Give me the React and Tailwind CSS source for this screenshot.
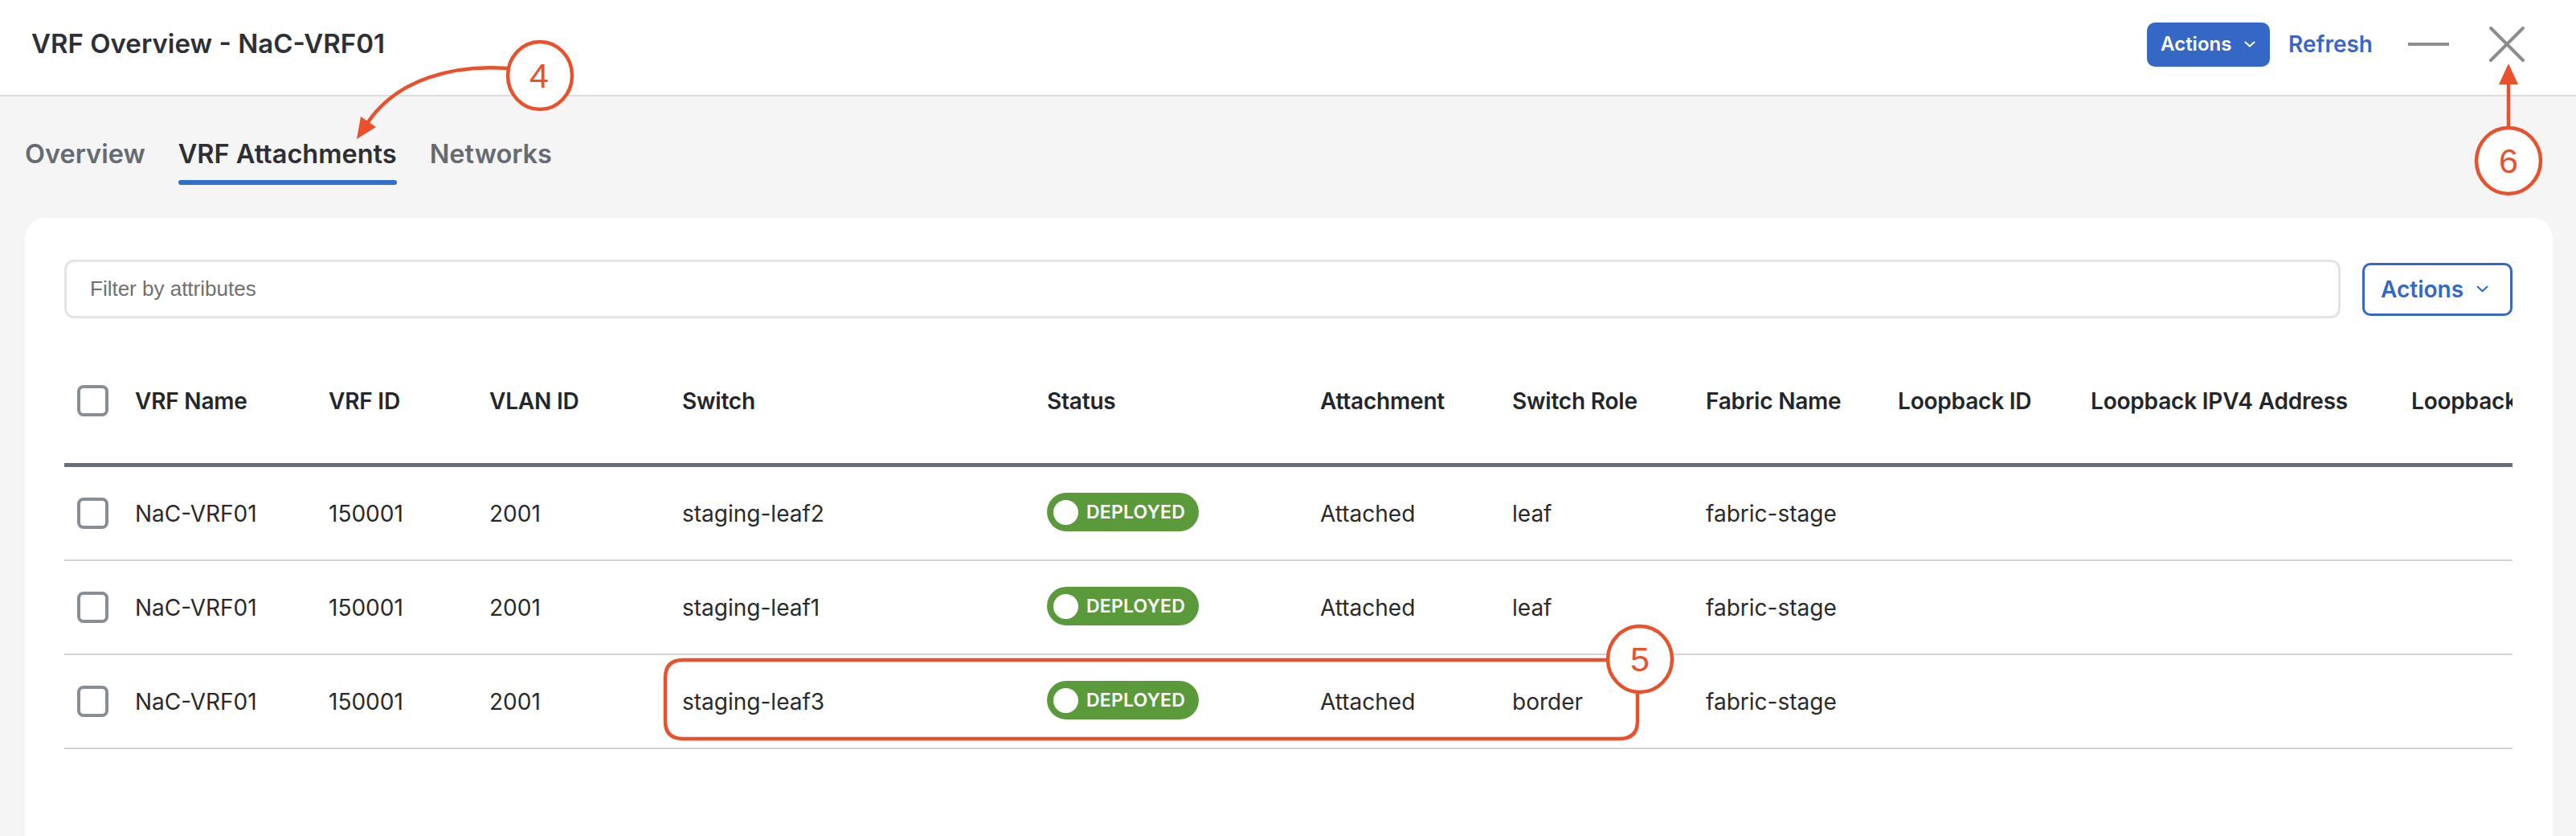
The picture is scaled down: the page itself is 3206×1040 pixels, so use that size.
import React from "react";

const COLS = "grid-cols-[72px_241px_200px_240px_454px_340px_239px_241px_239px_240px_399px_300px]";

function Checkbox() {
  return <div className="w-[39px] h-[39px] box-border border-[4px] border-[#888e96] rounded-[8px] bg-white" />;
}

function Chevron({ className }) {
  return (
    <svg className={className} viewBox="0 0 14 8" fill="none">
      <path d="M1.5 1.5 L7 6.5 L12.5 1.5" stroke="currentColor" strokeWidth="2" strokeLinecap="round" strokeLinejoin="round" />
    </svg>
  );
}

function Badge() {
  return (
    <div className="inline-flex items-center h-[48px] w-[189px] rounded-full bg-[#5b9a3b] pl-[8px]">
      <div className="w-[31px] h-[31px] rounded-full bg-white" />
      <span className="ml-[10px] text-[23px] font-semibold text-white tracking-[0.2px] leading-none">DEPLOYED</span>
    </div>
  );
}

const headers = [
  "VRF Name",
  "VRF ID",
  "VLAN ID",
  "Switch",
  "Status",
  "Attachment",
  "Switch Role",
  "Fabric Name",
  "Loopback ID",
  "Loopback IPV4 Address",
  "Loopback IPV6 Address",
];

const rows = [
  { sw: "staging-leaf2", role: "leaf" },
  { sw: "staging-leaf1", role: "leaf" },
  { sw: "staging-leaf3", role: "border" },
];

export default function App() {
  return (
    <div className="relative w-[3206px] h-[1040px] overflow-hidden bg-[#f5f5f5] font-['Inter',sans-serif]">
      {/* Header */}
      <header className="h-[120px] box-border bg-white border-b-2 border-[#dddddd] flex items-center pb-[8px] pl-[39px] pr-[63px]">
        <h1 className="text-[33px] font-semibold text-[#2d3036]">VRF Overview - NaC-VRF01</h1>
        <div className="ml-auto flex items-center">
          <button className="flex items-center h-[55px] w-[153px] rounded-[10px] bg-[#3567c6] text-white pl-[17px]">
            <span className="text-[24px] font-semibold">Actions</span>
            <Chevron className="ml-[16px] w-[14px] h-[8px] text-white" />
          </button>
          <span className="ml-[23px] text-[28px] font-semibold text-[#3a66c9]">Refresh</span>
          <div className="ml-[44px] w-[51px] h-[4px] bg-[#8e8e8e]" />
          <svg className="ml-[49px] w-[46px] h-[46px]" viewBox="0 0 46 46">
            <path d="M3 3 L43 43 M43 3 L3 43" stroke="#8c8c8c" strokeWidth="4" strokeLinecap="round" />
          </svg>
        </div>
      </header>

      {/* Tabs */}
      <nav className="mt-[52px] pl-[31px] flex gap-[41px]">
        <div className="flex flex-col">
          <span className="leading-[40px] text-[32.5px] font-semibold text-[#656b73]">Overview</span>
          <div className="mt-[12px] h-[6px]" />
        </div>
        <div className="flex flex-col">
          <span className="leading-[40px] text-[32.5px] font-semibold text-[#2c2f34]">VRF Attachments</span>
          <div className="mt-[12px] h-[6px] rounded-full bg-[#2f6fd0]" />
        </div>
        <div className="flex flex-col">
          <span className="leading-[40px] text-[32.5px] font-semibold text-[#656b73]">Networks</span>
          <div className="mt-[12px] h-[6px]" />
        </div>
      </nav>

      {/* Card */}
      <section className="mt-[41px] ml-[31px] mr-[29px] h-[800px] rounded-t-[26px] bg-white pt-[52px] pl-[49px] pr-[50px]">
        <div className="flex items-center">
          <div className="flex-1 h-[73px] box-border border-[3px] border-[#e3e4e8] rounded-[12px] flex items-center pl-[29px]">
            <span className="font-['Liberation_Sans',sans-serif] text-[26px] text-[#707070]">Filter by attributes</span>
          </div>
          <button className="ml-[27px] h-[66px] w-[187px] box-border border-[3px] border-[#3567c6] rounded-[10px] flex items-center pl-[20px] text-[#3567c6]">
            <span className="text-[28px] font-semibold">Actions</span>
            <Chevron className="ml-[16px] w-[15px] h-[9px]" />
          </button>
        </div>

        <div className="mt-[25px] overflow-hidden">
          <div className={`grid ${COLS} items-center h-[160px] box-border border-b-[5px] border-[#686d76] pl-[16px]`}>
            <Checkbox />
            {headers.map((h) => (
              <div key={h} className="text-[28px] font-semibold text-[#23262b] whitespace-nowrap tracking-[-0.2px]">
                {h}
              </div>
            ))}
          </div>
          {rows.map((r, i) => (
            <div
              key={i}
              className={`grid ${COLS} items-center h-[117px] box-border border-b-2 border-[#d3d3d3] pl-[16px] text-[28px] text-[#2a2a2a]`}
            >
              <Checkbox />
              <div>NaC-VRF01</div>
              <div>150001</div>
              <div>2001</div>
              <div>{r.sw}</div>
              <div>
                <Badge />
              </div>
              <div>Attached</div>
              <div>{r.role}</div>
              <div>fabric-stage</div>
              <div />
              <div />
              <div />
            </div>
          ))}
        </div>
      </section>

      {/* Annotations overlay */}
      <svg className="absolute left-0 top-0 pointer-events-none" width="3206" height="1040" viewBox="0 0 3206 1040">
        <g stroke="#e8512b" strokeWidth="4.5" fill="none" strokeLinecap="round">
          <path d="M632 85 C 565 80, 495 98, 458 152" />
          <ellipse cx="672" cy="94" rx="40" ry="42" fill="white" />
          <path d="M3122 160 L3122 102" />
          <ellipse cx="3122" cy="200" rx="40" ry="41" fill="white" />
          <path d="M2000 821 H850 Q828 821 828 843 V897 Q828 919 850 919 H2016 Q2038 919 2038 897 V861" />
          <ellipse cx="2041" cy="820" rx="40" ry="41" fill="white" />
        </g>
        <g fill="#e8512b">
          <polygon points="444,173 468,158 449,145" />
          <polygon points="3122,79 3110,105 3134,105" />
        </g>
        <g fill="#e8512b" fontFamily="Liberation Sans, Arial, sans-serif" fontSize="43" textAnchor="middle">
          <text x="671" y="109">4</text>
          <text x="3122" y="215">6</text>
          <text x="2041" y="835">5</text>
        </g>
      </svg>
    </div>
  );
}
